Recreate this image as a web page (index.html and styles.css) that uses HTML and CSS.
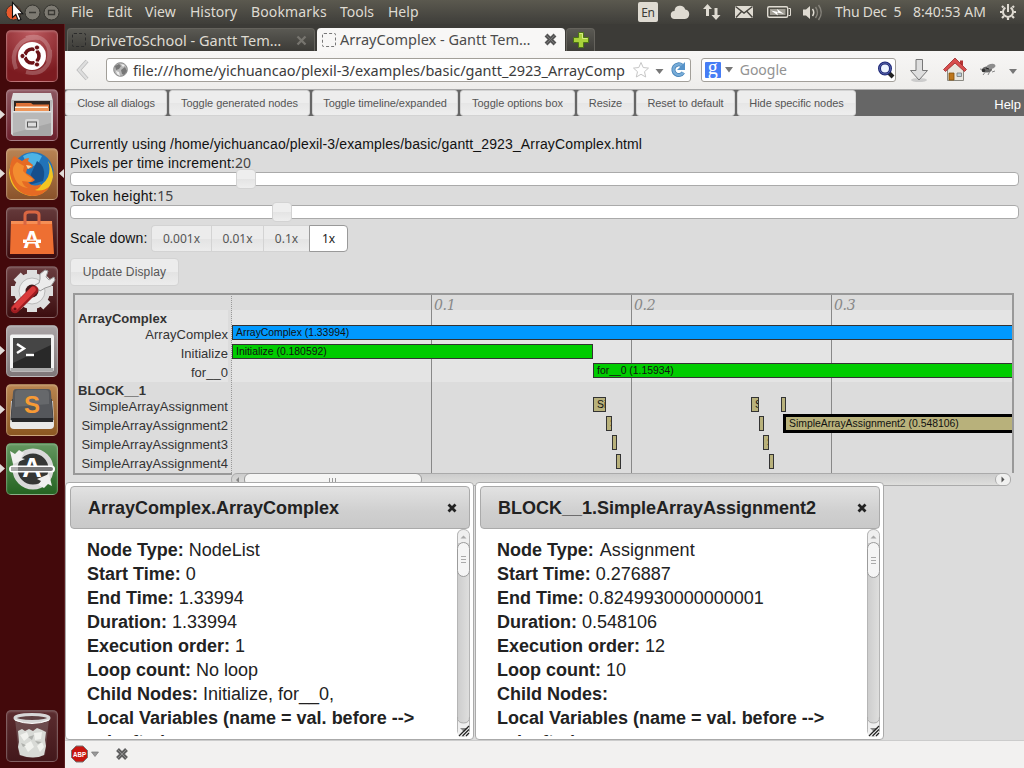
FILE: index.html
```html
<!DOCTYPE html>
<html lang="en">
<head>
<meta charset="utf-8">
<title>ArrayComplex - Gantt Temporal Plan Viewer</title>
<link rel="stylesheet" href="styles.css">
</head>
<body>
<div class="desktop">
  <header class="panel">
    <svg class="wincontrols" width="65" height="24" viewBox="0 0 65 24">
      <circle cx="13.500" cy="12.500" r="7.500" fill="#e8592c" stroke="#35332e"/>
      <g fill="#7d7a72" stroke="#34332e"><circle cx="32.500" cy="12.500" r="7.500"/><circle cx="51.500" cy="12.500" r="7.500"/></g>
      <path d="M29 12.500h7M48.500 10.500h6v4h-6z" fill="none" stroke="#3a3934" stroke-width="1.300"/>
      <path d="M12.500 2.500v15l3.300-3 2.500 6 2.600-1.100-2.500-5.700h4.300z" fill="#fff" stroke="#111" stroke-width="1.100"/>
    </svg>
    <nav class="menu"><span class="m1">File</span><span class="m2">Edit</span><span class="m3">View</span><span class="m4">History</span><span class="m5">Bookmarks</span><span class="m6">Tools</span><span class="m7">Help</span></nav>
    <div class="tray">
      <span class="lang">En</span>
      <svg width="172" height="24" viewBox="660 0 172 24">
        <g fill="#dfdbd2">
          <path d="M675 19a4 4 0 0 1-.5-8 5.500 5.500 0 0 1 10.700-1.500A4.800 4.800 0 0 1 685 19z"/>
          <path d="M707.500 4l4.500 5h-3v7h-3V9h-3zM716 20l-4.500-5h3V8h3v7h3z"/>
          <path d="M735 6h18v12h-18z"/>
          <path d="M803 9.500h3l4-3.500v13l-4-3.500h-3z"/>
        </g>
        <path d="M735.500 6.500l8.500 6.500 8.500-6.500M736 17.500l5.500-6M752.500 17.500l-5.500-6" fill="none" stroke="#46443e" stroke-width="1.400"/>
        <rect x="767.700" y="6.700" width="20" height="10.600" rx="1.500" fill="none" stroke="#dfdbd2" stroke-width="1.400"/>
        <rect x="770" y="9" width="15.500" height="6" fill="#a09d94"/>
        <path d="M788.500 8.500h2v7h-2" fill="none" stroke="#dfdbd2"/>
        <path d="M771 10.500l7 1.500-1-3 7 5-7-1.500 1 3z" fill="#fff"/>
        <path d="M812.500 9q2.500 3.500 0 7" fill="none" stroke="#dfdbd2" stroke-width="1.500"/>
        <path d="M815.500 7q4 5.500 0 11M818.500 5q5.500 7.500 0 15" fill="none" stroke="#85827a" stroke-width="1.500"/>
      </svg>
      <span class="date">Thu Dec&nbsp; 5</span><span class="clock">8:40:53 AM</span>
      <svg class="gear" width="18" height="18" viewBox="-9 -9 18 18" fill="none" stroke="#dfdbd2">
        <path d="M-2.600-4.300A5 5 0 1 0 2.600-4.300" stroke-width="2"/><path d="M0-8v8" stroke-width="2"/>
        <path d="M5.500 0H8M-5.500 0H-8M0 5.500V8M4 4l2 2M-4 4l-2 2M4.500-4.500l1.500-1.500M-4.500-4.500l-1.500-1.500" stroke-width="2.200"/>
      </svg>
    </div>
  </header>

  <div class="workspace">
    <aside class="launcher">
      <div class="tile ubuntu"><svg viewBox="0 0 52 52">
        <g fill="none" stroke="#fff" stroke-opacity=".22" stroke-width="4"><path d="M10 39C3 22 14 6 33 8M20 8c17-5 27 7 22 24M44 20c2 17-10 26-24 22"/></g>
        <circle cx="26" cy="26" r="14" fill="#fff"/><circle cx="26" cy="26" r="7" fill="none" stroke="#6c1217" stroke-width="3.600"/>
        <path d="M26 26L15 26M26 26l6-10M26 26l6 10" stroke="#fff" stroke-width="1.500"/><circle cx="26" cy="26" r="4.500" fill="#fff"/>
        <g fill="#6c1217" stroke="#fff"><circle cx="16.500" cy="26" r="2.600"/><circle cx="31" cy="17.500" r="2.600"/><circle cx="31" cy="34.500" r="2.600"/></g>
      </svg></div>
      <div class="tile files"><svg viewBox="0 0 52 52">
        <path d="M7 4h38l2 8H5z" fill="#dedede"/><path d="M5 11h42v11H5z" fill="#b9b9b9"/><path d="M8 12h36v10H8z" fill="#2d2522"/>
        <path d="M10 14h15l2 1.500h16V22H10z" fill="#dd7137"/><path d="M9 17.500h33V22H9z" fill="#fff0dc"/><path d="M9 19h34v3H9z" fill="#ee9558"/>
        <path d="M7 22h38v25H7z" fill="#a7a7a7"/><path d="M7 22h38v12L7 44z" fill="#b8b8b8"/><path d="M7 22h38v1.500H7z" fill="#e5e5e5"/><path d="M5 12v33l2 2V22zM47 12v33l-2 2V22z" fill="#d2d2d2"/>
        <rect x="19" y="30" width="14" height="11" rx="2" fill="#d7d7d7"/><rect x="21.500" y="33" width="9" height="5" fill="#ddd" stroke="#555"/>
      </svg></div>
      <div class="tile firefox"><svg viewBox="0 0 52 52">
        <circle cx="27" cy="24.500" r="20.500" fill="#2273b8"/><path d="M17 8q9-6 19 0l-4 8-9 4z" fill="#4cb3e5"/><path d="M31 13q10 6 6 20l-14 4 2-11z" fill="#164f8c"/>
        <path d="M42 13q3 8 0 16-5 10-16 11-11-1-15-12l3-13-5-5q-5 6-6 15 2 20 22 23 18 0 22-19 0-9-5-16z" fill="#f3c522"/>
        <path d="M8 8q-5 7-4 18 4 20 22 22 12 0 18-10-7 6-15 4 6-2 6-6-8 4-13-2 4 1 7-2l-4-4-5-3 1-4 5-1 1-3-5-4 1-3q-4 0-7 3z" fill="#e56a24"/>
        <path d="M7 25q3 14 15 15-5-2-6-7l8 1 3-3-6-4-4-4 1-5-7-4q-5 4-4 11z" fill="#f38d2f"/><path d="M20 17l6 1-4 3z" fill="#f8d9a5"/>
      </svg></div>
      <div class="tile store"><svg viewBox="0 0 52 52">
        <path d="M5 14h41l2 33H4z" fill="#ee6f32"/><path d="M5 14h41v3H5z" fill="#f58e55"/>
        <path d="M19 18V8q0-3 4-3h6q4 0 4 3v10" fill="none" stroke="#d96642" stroke-width="3"/>
        <text x="26" y="41" text-anchor="middle" class="glyphA" font-size="24" fill="#fff">A</text><path d="M17 32.500h18v3.500H17z" fill="#fff"/><path d="M21 33.700h9v1.300h-9z" fill="#ee7739"/>
      </svg></div>
      <div class="tile settings"><svg viewBox="0 0 52 52">
        <g transform="translate(26 25)"><circle r="14" fill="none" stroke="#dedede" stroke-width="8"/><g fill="#dedede"><path d="M-5-21H5v42H-5z" /><path d="M-21-5H21V5H-21z"/><path d="M-5-21H5v42H-5z" transform="rotate(45)"/><path d="M-5-21H5v42H-5z" transform="rotate(-45)"/></g><circle r="13" fill="#ededed" stroke="#bbb"/><circle r="6.500" fill="#41191b"/></g>
        <path d="M29 19l4-2 1-4 0-5 5-4 3 1-2 6 3 3 5-3 1 3-4 6-6 2-5 3z" fill="#ececec" stroke="#9a9a9a"/><path d="M9 43L28 24" stroke="#9d1c20" stroke-width="8.500" stroke-linecap="round"/><path d="M9 42L27 23.500" stroke="#d93a3b" stroke-width="5.500" stroke-linecap="round"/><circle cx="9" cy="43" r="1.600" fill="#6d0d12"/>
      </svg></div>
      <div class="tile terminal"><svg viewBox="0 0 52 52">
        <rect x="4" y="9.500" width="44" height="37" rx="2" fill="#f3f3f3"/><rect x="4.500" y="43" width="43" height="3" fill="#aaa"/><rect x="7" y="13" width="38" height="30" fill="#292929"/><path d="M7 13h38v7L7 38z" fill="#454545"/>
        <path d="M11 19l7 4.500-7 4.500" fill="none" stroke="#fff" stroke-width="2.400"/><path d="M20 30h8" stroke="#fff" stroke-width="2.400"/>
      </svg></div>
      <div class="tile sublime"><svg viewBox="0 0 52 52">
        <path d="M5 17h42l1 24q0 4-4 4H8q-4 0-4-4z" fill="#e9e9e9"/><path d="M6 15h40l1.500 21h-43z" fill="#35363a"/><path d="M10 5h32q3 0 3 4l2 26H5L7 9q0-4 3-4z" fill="#55575b"/><path d="M5 34h42v4H6z" fill="#27282b"/><path d="M12 6h28q3 0 3 4v10L9 23V10q0-4 3-4z" fill="#66686b"/>
        <text x="26" y="29" text-anchor="middle" class="glyphS" font-size="24" fill="#f79a35">S</text>
      </svg></div>
      <div class="tile updater"><svg viewBox="0 0 52 52">
        <circle cx="27" cy="26" r="18" fill="#353735" stroke="#d9d9d9" stroke-width="5"/><path d="M4 8l3 13 12-5-4-1 3-5-5-3-4 4zM46 43l-3-12-12 5 4 2-3 4 6 3 4-4z" fill="#f0f0ef"/>
        <text x="26" y="34" text-anchor="middle" class="glyphA" font-size="27" fill="#fff">A</text><rect x="3" y="22.500" width="46" height="7" rx="3.500" fill="#fff"/><rect x="5" y="24" width="42" height="4" rx="2" fill="#777"/><path d="M5 24h7v4H5z" fill="#aaa"/>
      </svg></div>
      <div class="tile trash"><svg viewBox="0 0 52 52">
        <path d="M9 9l4 36q12 5 26 0l4-36z" fill="#aaa" fill-opacity=".28"/>
        <path d="M12 21l4-2 3 2 4-2 4 2 4-3 5 2 4 2-1 8 1 6-2 9q-10 5-24 0l-2-8 1-5z" fill="#d8dad6"/><path d="M14 25l7-3 2 5-5 4zM28 23l8-1-1 7-6 1zM18 35l7-4 3 6-6 5zM31 36l5-4 2 5-4 5z" fill="#f1f2ee"/><path d="M22 27l4 3 2-5zM15 33l2 4 3-2zM29 31l3 3 4-2z" fill="#aeb0ac"/>
        <ellipse cx="26" cy="8" rx="17" ry="3.500" fill="#5f4142" stroke="#d7d7d7" stroke-width="3"/><path d="M9 10q17 7 34 0" fill="none" stroke="#fff"/>
      </svg></div>
    </aside>
    <svg class="pips" width="65" height="500" viewBox="0 0 65 500" fill="#e2dcd9"><path d="M0 110l5 4.500-5 4.500zM0 169l5 4.500-5 4.500zM64 169l-5 4.500 5 4.500zM0 346l5 4.500-5 4.500zM0 405l5 4.500-5 4.500zM0 464l5 4.500-5 4.500z"/></svg>

    <main class="browser">
      <div class="tabs">
        <div class="tab idle"><i class="blank"></i><span>DriveToSchool - Gantt Tem…</span><svg width="11" height="11" viewBox="0 0 11 11"><path d="M1.500 1.500l8 8M9.500 1.500l-8 8" stroke="#77756f" stroke-width="2.300"/></svg></div>
        <div class="tab active"><i class="blank"></i><span>ArrayComplex - Gantt Tem…</span><svg width="13" height="13" viewBox="0 0 13 13"><path d="M2 2l9 9M11 2l-9 9" stroke="#555" stroke-width="4"/><path d="M2.500 2.500l8 8M10.500 2.500l-8 8" stroke="#777"/></svg></div>
        <div class="newtab"><svg width="18" height="18" viewBox="0 0 18 18"><path d="M6.500 1.500h5v5h5v5h-5v5h-5v-5h-5v-5h5z" fill="#a9d13b" stroke="#4c7416"/><path d="M7.500 2.500h3v5h5" fill="none" stroke="#d6ed83"/></svg></div>
      </div>
      <div class="navbar">
        <svg class="back" width="16" height="24" viewBox="0 0 16 24"><path d="M12 3L4 12l8 9" fill="none" stroke="#bbb" stroke-width="4"/><path d="M12 3L4 12l8 9" fill="none" stroke="#dedede" stroke-width="2.500"/></svg>
        <div class="field url">
          <svg width="15" height="15" viewBox="0 0 15 15"><circle cx="7.500" cy="7.500" r="6.800" fill="#b7b7b7" stroke="#888"/><path d="M2 4l4-2 2 2-2 3-3 1zM8 8l4-3 2 4-3 4-2-1z" fill="#777"/><path d="M8 2l4 1-2 2zM3 9l3 1 1 4-3-2z" fill="#f0f0f0"/></svg>
          <span class="address">file:///home/yichuancao/plexil-3/examples/basic/gantt_2923_ArrayComp</span>
          <svg class="urlicons" width="58" height="20" viewBox="632 60 58 20">
            <path d="M641 62.500l2.200 5 5.300.6-4 3.600 1.200 5.300-4.700-2.700-4.700 2.700 1.200-5.300-4-3.600 5.300-.6z" fill="#fff" stroke="#c6c6c6"/>
            <path d="M655.500 69h8l-4 5z" fill="#777"/>
            <path d="M682 65.500a5.300 5.300 0 1 0 1.200 7" fill="none" stroke="#427fb5" stroke-width="4"/><path d="M682 65.500a5.300 5.300 0 1 0 1.200 7" fill="none" stroke="#77acd8" stroke-width="2.500"/><path d="M685 62v8h-8z" fill="#5693c9"/>
          </svg>
        </div>
        <div class="field search"><b>g</b><svg width="8" height="6" viewBox="0 0 8 6"><path d="M0 0h8L4 5.500z" fill="#777"/></svg><span>Google</span>
          <svg width="18" height="18" viewBox="0 0 18 18"><path d="M12 12l4 4" stroke="#222" stroke-width="4"/><circle cx="8" cy="7.500" r="5.500" fill="#edf4ff" stroke="#1e2878" stroke-width="3"/><circle cx="8" cy="7.500" r="5.500" fill="none" stroke="#6673b5" stroke-width=".8"/></svg></div>
        <svg class="actions" width="112" height="28" viewBox="906 56 112 28">
          <ellipse cx="919" cy="80" rx="8" ry="2" fill="#ccc"/><path d="M916 59.500h6.500v11h5l-8.500 9.500-8.500-9.500H916z" fill="#dedede" stroke="#777"/>
          <path d="M947.500 69v11.500h16V69l-8-7z" fill="#e8e6df" stroke="#8a8982"/><path d="M960 60.500h3v5h-3z" fill="#b43333"/><path d="M955 58l11.500 11.500-2 2L955 63l-9.500 8.500-2-2z" fill="#d84d4d" stroke="#9c2929" stroke-width=".8"/><path d="M949 73h5v7h-5z" fill="#bd761b" stroke="#84500b" stroke-width=".8"/><path d="M957 73h4.500v3.500H957z" fill="#b9d0dc" stroke="#777" stroke-width=".8"/>
          <path d="M983 75l3-4M988 75l2-4M980 69l5 1M992 72l3-1" stroke="#888"/><ellipse cx="987" cy="69.500" rx="5" ry="3" fill="#666"/><ellipse cx="991" cy="66.500" rx="4.500" ry="2.500" fill="#8d8d8d" transform="rotate(-15 991 66.500)"/><circle cx="983.500" cy="70.500" r="1.800" fill="#333"/><path d="M986 68l3 1" stroke="#222"/>
          <path d="M1009 69h8l-4 5z" fill="#777"/>
        </svg>
      </div>

      <div class="page">
        <div class="toolbar">
          <button class="b1">Close all dialogs</button><button class="b2">Toggle generated nodes</button><button class="b3">Toggle timeline/expanded</button><button class="b4">Toggle options box</button><button class="b5">Resize</button><button class="b6">Reset to default</button><button class="b7">Hide specific nodes</button><span class="help">Help</span>
        </div>
        <section class="options">
          <div class="line using"><span>Currently using /home/yichuancao/plexil-3/examples/basic/gantt_2923_ArrayComplex.html</span></div>
          <div class="line"><span class="pix">Pixels per time increment:</span><span class="val">20</span></div>
          <div class="slider"><div class="knob k1"></div></div>
          <div class="line"><span class="tok">Token height:</span><span class="val">15</span></div>
          <div class="slider"><div class="knob k2"></div></div>
          <div class="scale"><span class="down">Scale down:</span><div class="set"><button class="s1">0.001x</button><button class="s2">0.01x</button><button class="s3">0.1x</button><button class="s4">1x</button></div></div>
          <button class="update">Update Display</button>
        </section>
        <section class="gantt">
          <div class="labels">
            <div class="group first"><h3>ArrayComplex</h3><p>ArrayComplex</p><p>Initialize</p><p>for__0</p></div>
            <div class="group"><h3>BLOCK__1</h3><p>SimpleArrayAssignment</p><p>SimpleArrayAssignment2</p><p>SimpleArrayAssignment3</p><p>SimpleArrayAssignment4</p></div>
          </div>
          <div class="chart">
            <div class="band"></div>
            <div class="ticks"><span></span><span>0.1</span><span>0.2</span><span>0.3</span></div>
            <div class="bar blue" style="left:0;top:30px;width:790px">ArrayComplex (1.33994)</div>
            <div class="bar green" style="left:0;top:49px;width:361px">Initialize (0.180592)</div>
            <div class="bar green" style="left:361px;top:68px;width:430px">for__0 (1.15934)</div>
            <div class="bar" style="left:361px;top:102px;width:13px">Si</div>
            <div class="bar" style="left:374px;top:121px;width:6px">S</div>
            <div class="bar" style="left:380px;top:140px;width:4px"></div>
            <div class="bar" style="left:384px;top:159px;width:3px"></div>
            <div class="bar" style="left:519px;top:102px;width:8px">S</div>
            <div class="bar" style="left:527px;top:121px;width:4px"></div>
            <div class="bar" style="left:531px;top:140px;width:6px">S</div>
            <div class="bar" style="left:537px;top:159px;width:4px"></div>
            <div class="bar" style="left:549px;top:102px;width:5px"></div>
            <div class="bar selected" style="left:551px;top:119px;width:300px">SimpleArrayAssignment2 (0.548106)</div>
          </div>
          <div class="hscroll"><i class="hl"><svg width="12" height="12"><path d="M7 3v6L4 6z" fill="#888"/></svg></i><i class="hthumb"><svg width="8" height="5"><path d="M.5 0v5M3.500 0v5M6.500 0v5" stroke="#999"/></svg></i><i class="hr"><svg width="12" height="12"><path d="M5.500 2.500v6l3-3z" fill="#555"/></svg></i></div>
        </section>
      </div>
      <footer class="status">
        <svg width="60" height="20" viewBox="0 0 60 20"><path d="M5 2h7l4.500 4.500v7L12 18H5L.5 13.500v-7z" fill="#c8150f" stroke="#777"/><text x="8.500" y="13" text-anchor="middle" class="abp" textLength="13" lengthAdjust="spacingAndGlyphs">ABP</text><path d="M20.500 8h7l-3.500 4.500z" fill="#999" stroke="#777" stroke-width=".7"/><path d="M46.500 5.500l9 9M55.500 5.500l-9 9" stroke="#5f5f5f" stroke-width="4"/><path d="M47 6l8 8M55 6l-8 8" stroke="#8a8a8a"/></svg>
      </footer>
    </main>
  </div>

  <div class="dialog d1">
    <div class="title"><b class="t1">ArrayComplex.ArrayComplex</b><svg width="10" height="10" viewBox="0 0 10 10"><path d="M1.500 1.500l7 7M8.500 1.500l-7 7" stroke="#222" stroke-width="2.800"/></svg></div>
    <div class="body"><div class="text"><p><b>Node Type:</b> NodeList</p><p><b>Start Time:</b> 0</p><p><b>End Time:</b> 1.33994</p><p><b>Duration:</b> 1.33994</p><p><b>Execution order:</b> 1</p><p><b>Loop count:</b> No loop</p><p><b>Child Nodes:</b> Initialize, for__0,</p><p><b>Local Variables (name = val. before --&gt;</b></p><p><b>val. after):</b></p></div>
      <div class="vscroll"><svg width="13" height="208" viewBox="0 0 13 208"><rect x=".5" y=".5" width="12" height="206" rx="6" fill="none" stroke="#b5b5b5"/><path d="M1 14V7q0-6 5.500-6T12 7v7z" fill="#efefef"/><path d="M3.500 9.500h6l-3-3z" fill="#aaa"/><rect x=".5" y="13.500" width="12" height="34" rx="6" fill="#f5f5f5" stroke="#9b9b9b"/><path d="M4 27.500h5M4 30.500h5M4 33.500h5" stroke="#aaa"/><path d="M1 189q1 5 5.500 5t5.500-5v18H1z" fill="#efefef"/><path d="M.5 188q0 6 6 6t6-6" fill="none" stroke="#aaa"/><path d="M3 199h8l-4 4z" fill="#888"/><path d="M2 207L12 197M5.500 207l6.500-6.500M9 207l3-3" stroke="#222" stroke-width="1.200"/></svg></div></div>
  </div>
  <div class="dialog d2">
    <div class="title"><b class="t2">BLOCK__1.SimpleArrayAssignment2</b><svg width="10" height="10" viewBox="0 0 10 10"><path d="M1.500 1.500l7 7M8.500 1.500l-7 7" stroke="#222" stroke-width="2.800"/></svg></div>
    <div class="body"><div class="text"><p><b>Node Type:</b> <span class="assign">Assignment</span></p><p><b>Start Time:</b> 0.276887</p><p><b>End Time:</b> 0.8249930000000001</p><p><b>Duration:</b> 0.548106</p><p><b>Execution order:</b> 12</p><p><b>Loop count:</b> 10</p><p><b>Child Nodes:</b></p><p><b>Local Variables (name = val. before --&gt;</b></p><p><b>val. after):</b></p></div>
      <div class="vscroll"><svg width="13" height="208" viewBox="0 0 13 208"><rect x=".5" y=".5" width="12" height="206" rx="6" fill="none" stroke="#b5b5b5"/><path d="M1 14V7q0-6 5.500-6T12 7v7z" fill="#efefef"/><path d="M3.500 9.500h6l-3-3z" fill="#aaa"/><rect x=".5" y="13.500" width="12" height="35" rx="6" fill="#f5f5f5" stroke="#9b9b9b"/><path d="M4 28.500h5M4 31.500h5M4 34.500h5" stroke="#aaa"/><path d="M1 189q1 5 5.500 5t5.500-5v18H1z" fill="#efefef"/><path d="M.5 188q0 6 6 6t6-6" fill="none" stroke="#aaa"/><path d="M3 199h8l-4 4z" fill="#888"/><path d="M2 207L12 197M5.500 207l6.500-6.500M9 207l3-3" stroke="#222" stroke-width="1.200"/></svg></div></div>
  </div>
</div>
</body>
</html>
```
FILE: styles.css
```css
* { box-sizing: border-box; }
body, h3, p { margin: 0; }
body { overflow: hidden; font-family: "Liberation Sans", Arial, sans-serif; }
svg { display: block; flex: none; }
button { font-family: inherit; padding: 0; white-space: nowrap; }
i { display: block; }

.desktop { position: relative; width: 1024px; height: 768px; overflow: hidden; display: flex; flex-direction: column; background: #3c3b37; }

.panel { height: 24px; flex: none; display: flex; background: linear-gradient(#5b594f, #44433e 80%, #3f3e39); color: #dfdbd2; font: 14px/24px "Noto Sans", sans-serif; white-space: pre; }
.menu { width: 567px; padding-left: 6px; display: grid; grid-template-columns: 36px 38px 45px 61px 89px 48px 50px; }
.m5 { letter-spacing: .15px; }
.tray { display: flex; align-items: center; flex: 1; padding-left: 6px; }
.lang { width: 20px; height: 20px; background: #dfdbd2; color: #3c3b37; border-radius: 2px; text-align: center; font-size: 12px; line-height: 21px; margin-right: 2px; letter-spacing: -.3px; }
.date { width: 78px; margin-left: 3px; letter-spacing: -.25px; }
.clock { width: 86px; }

.workspace { flex: 1; display: flex; min-height: 0; }
.launcher { width: 65px; flex: none; padding: 6px 0 6px 6px; background: linear-gradient(90deg, #43090b 64px, #5c2022 64px); display: flex; flex-direction: column; gap: 7px; }
.pips { position: absolute; left: 0; top: 0; }
.tile { width: 52px; height: 52px; flex: none; border-radius: 5px; border: 1px solid rgba(255,255,255,.25); box-shadow: inset 0 1px 2px rgba(255,255,255,.2); }
.tile svg { width: 52px; height: 52px; margin: -1px; }
.ubuntu { background: radial-gradient(circle at 50% 0, #bd5b60, #7c1b20 80%); }
.files { background: linear-gradient(#8d5660, #6b202c); }
.firefox { background: linear-gradient(#b98454, #8a532b); }
.store { background: linear-gradient(#653a3b, #3b0b0d); }
.settings { background: linear-gradient(#6a3d3f, #3c0d0f); }
.terminal { background: linear-gradient(#aaa4a6, #7f7779); }
.sublime { background: linear-gradient(#ba8550, #8c5722); }
.updater { background: linear-gradient(#63965f, #256422); }
.trash { background: linear-gradient(#5b2c2f, #43181b); margin-top: auto; }
.glyphA, .glyphS { font-family: "Liberation Sans", sans-serif; font-weight: bold; }

.browser { width: 959px; display: flex; flex-direction: column; background: #3c3b37; }
.tabs { height: 27px; flex: none; padding: 4px 0 0 2px; display: flex; gap: 2px; font: 14.500px/23px "Noto Sans", sans-serif; }
.tab { height: 23px; display: flex; align-items: center; border-radius: 4px 4px 0 0; white-space: nowrap; padding-left: 5px; }
.tab span { margin-left: 4px; width: 204px; }
.idle { width: 248px; padding-left: 4px; color: #dfdbd2; background: linear-gradient(#5a5953, #3c3b37); border: 1px solid #65635d; border-bottom: 0; }
.active { width: 248px; color: #4c4c4c; background: #f8f7f6; }
.idle span { width: 206px; line-height: 20px; padding-bottom: 1px; }
.blank { width: 14px; height: 14px; border: 1px dashed #2b2b2b; border-radius: 2px; flex: none; }
.active .blank { border-color: #777; }
.newtab { width: 29px; height: 23px; margin-left: -1px; padding: 2px 5px; background: linear-gradient(#5a5953, #3e3d39); border: 1px solid #65635d; border-bottom: 0; border-radius: 4px 4px 0 0; }
.navbar { height: 39px; flex: none; display: flex; align-items: center; background: linear-gradient(#f7f6f5, #eeedeb); border-bottom: 1px solid #aaa; padding-bottom: 1px; font: 14px/22px "Noto Sans", sans-serif; }
.back { margin: 0 15px 0 10px; }
.field { height: 24px; display: flex; align-items: center; background: #fff; border: 1px solid #a29f99; border-radius: 3px; }
.url { width: 585px; padding-left: 6px; }
.address { width: 499px; margin-left: 5px; color: #3c3c3c; white-space: nowrap; font-size: 14.500px; }
.search { width: 195px; margin-left: 10px; padding-left: 3px; }
.search b { width: 16px; height: 16px; border-radius: 1px; background: #467df5; color: #fff; font: 20px/11px "Liberation Serif", serif; text-align: center; margin-right: 4px; }
.search span { margin-left: 7px; width: 140px; color: #929292; }
.actions { margin-left: 10px; }

.page { flex: 1; min-height: 0; background: #dcdcdc; overflow: hidden; }
.toolbar { height: 26px; background: #666; display: flex; align-items: flex-start; gap: 2px; }
.toolbar button { height: 26px; border: 1px solid #d3d3d3; border-radius: 3px; background: linear-gradient(#ededed 0 50%, #e6e6e6 50%, #eee); color: #555; font-size: 11px; line-height: 24px; letter-spacing: -.05px; }
.toolbar .b1 { width: 102px; letter-spacing: -.15px; }
.b2 { width: 141px; } .b3 { width: 146px; } .b4 { width: 115px; } .b5 { width: 57px; } .b6 { width: 99px; } .b7 { width: 119px; }
.help { margin: 5px 3px 0 auto; color: #fff; font-size: 13px; line-height: 19px; }

.options { height: 177px; padding: 19px 5px 0; font-size: 14px; color: #111; }
.line { height: 19px; display: flex; align-items: center; white-space: nowrap; }
.using { height: 18px; letter-spacing: .13px; }
.pix { letter-spacing: .15px; }
.tok { letter-spacing: .3px; }
.val { color: #444; font: 14px/18px "Noto Sans", sans-serif; }
.slider { height: 14px; width: 949px; border: 1px solid #aaa; border-radius: 4px; background: #fff; }
.knob { height: 20px; width: 20px; margin-top: -4px; border: 1px solid #d3d3d3; border-radius: 4px; background: linear-gradient(#eee 50%, #e4e4e4 50%, #eee); }
.k1 { margin-left: 165px; } .k2 { margin-left: 201px; }
.scale { height: 27px; margin-top: 6px; display: flex; align-items: center; }
.down { width: 81px; padding-bottom: 2px; letter-spacing: .1px; }
.set { display: flex; }
.set button { height: 27px; border: 1px solid #d3d3d3; border-right: 0; background: linear-gradient(#ececec 50%, #e3e3e3 50%, #ececec); color: #555; font: 12px/25px "Noto Sans", sans-serif; }
.set .s1 { width: 60px; border-radius: 4px 0 0 4px; } .set .s2 { width: 52px; } .set .s3 { width: 46px; }
.set .s4 { width: 39px; border: 1px solid #999; border-radius: 0 4px 4px 0; background: #fff; color: #212121; }
.update { display: block; margin-top: 6px; width: 109px; height: 28px; border: 1px solid #d3d3d3; border-radius: 4px; background: linear-gradient(#ececec 50%, #e3e3e3 50%, #ececec); color: #555; font-size: 12px; letter-spacing: .15px; }

.gantt { margin-left: 8px; width: 941px; display: grid; grid-template-columns: 158px 783px; grid-template-rows: 180px 13px; }
.labels { border: 2px solid #999; border-right: 0; padding: 15px 4px 0 3px; width: 159px; height: 182px; color: #333; }
.group { height: 72px; white-space: nowrap; }
.first { background: #e4e4e4; }
.group h3 { font-size: 13px; line-height: 18px; height: 15px; }
.group p { font-size: 13px; line-height: 19px; text-align: right; letter-spacing: .03px; }
.chart { position: relative; border: 2px solid #999; border-left: 1px dotted #999; border-bottom: 0; height: 180px; overflow: hidden; }
.ticks { height: 178px; display: grid; grid-template-columns: repeat(4, 200px); color: #888; font: italic 14px/21px "DejaVu Serif", serif; letter-spacing: -.3px; position: relative; margin-left: -1px; }
.ticks span + span { border-left: 1px solid #888; padding-left: 2px; }
.band { position: absolute; left: 0; right: 0; top: 15px; height: 72px; background: #e4e4e4; }
.bar { position: absolute; height: 15px; overflow: hidden; border: 1px solid #333; background: #b8b17b; color: #111; font-size: 10.400px; line-height: 14px; padding-left: 3px; white-space: nowrap; }
.blue { background: #0099ff; }
.green { background: #00cc00; }
.selected { height: 19px; border: 3px solid #000; line-height: 14px; }
.hscroll { grid-column: 2; margin: 0 3px 0 0; height: 13px; display: flex; align-items: stretch; border: 1px solid #aaa; border-radius: 6px; background: linear-gradient(#ccc, #dededc); }
.hl { width: 12px; }
.hthumb { width: 178px; border: 1px solid #999; border-radius: 6px; background: #f5f5f4; margin: -1px 0; padding: 4px 84px; }
.hr { width: 15px; margin-left: auto; border-left: 1px solid #aaa; border-radius: 6px; background: #f0f0ef; }
.status { height: 28px; flex: none; background: #f2f1f0; border-top: 1px solid #ccc; padding: 3px 0 0 6px; }
.abp { font: bold 8px "Liberation Sans", sans-serif; fill: #fff; }

.dialog { position: absolute; top: 482px; z-index: 5; width: 409px; height: 258px; padding: 3px; border: 1px solid #aaa; border-radius: 4px; background: #fff; color: #222; }
.d1 { left: 65px; } .d2 { left: 475px; }
.title { height: 43px; margin-left: 1px; width: 400px; border: 1px solid #aaa; border-radius: 4px; background: linear-gradient(#e2e2e2, #cfcfcf 60%, #c9c9c9); display: flex; align-items: center; justify-content: space-between; padding: 0 12px 0 17px; font-size: 18px; white-space: nowrap; }
.title b { line-height: 20px; }
.body { display: flex; height: 208px; overflow: hidden; }
.text { width: 388px; height: 207px; overflow: hidden; padding: 9px 0 0 18px; font-size: 18px; line-height: 24px; white-space: nowrap; }
.assign { letter-spacing: .1px; margin-left: 1px; }
.vscroll { width: 13px; height: 208px; border-radius: 6px; background: linear-gradient(90deg, #ccc, #e0e0df); }
```
